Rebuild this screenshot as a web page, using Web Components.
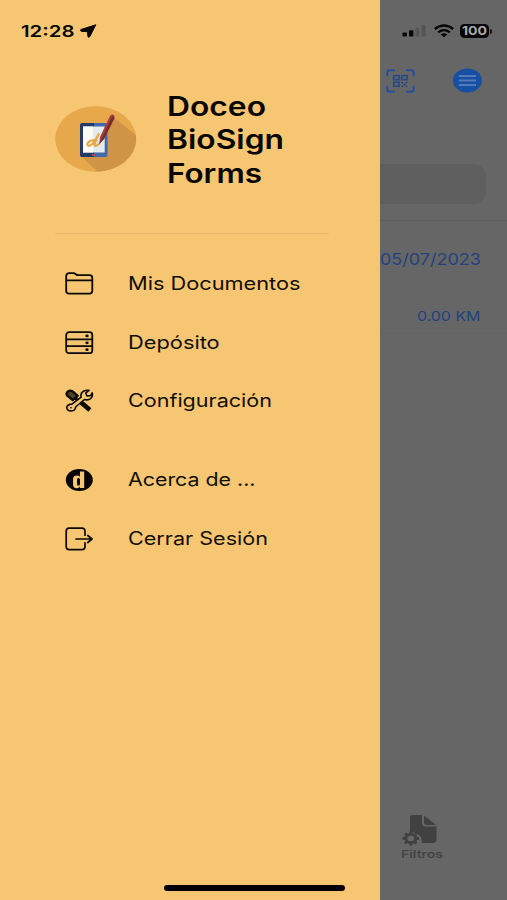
<!DOCTYPE html>
<html lang="es"><head><meta charset="utf-8"><title>Doceo BioSign Forms</title>
<style>html,body{margin:0;height:900px;overflow:hidden;background:#666}body{font-family:Inter,"Liberation Sans",sans-serif}</style></head>
<body><app-screen></app-screen>
<script>
const define=(name,html,ready)=>customElements.define(name,class extends HTMLElement{
  connectedCallback(){
    if(this.shadowRoot)return;
    this.attachShadow({mode:'open'}).innerHTML=html;
    if(ready)ready(this,this.shadowRoot);
  }
});

// A single line of text stretched horizontally to a given width.
define('wide-text',`<style>:host{display:block;white-space:nowrap;flex:none}span{display:inline-block;transform-origin:0 50%}</style><span><slot></slot></span>`,(el,root)=>{
  const s=root.querySelector('span'),w=+el.getAttribute('w');
  s.style.transform='scaleX('+w/s.getBoundingClientRect().width+')';
  el.style.width=w+'px';
});

const icons={
folder:`<g fill="none" stroke="#0b0903" stroke-width="1.8" stroke-linejoin="round"><path d="M1.2 20V4.2Q1.2 1.2 4.2 1.2H8.2Q9.5 1.2 10.8 2.2Q12 3.2 13.5 3.2H24.500Q27.300 3.200 27.300 6V18.800Q27.300 21.600 24.500 21.600H4Q1.200 21.600 1.200 18.800ZM1.200 8.300H27.300"/></g>`,
server:`<g fill="none" stroke="#0b0903" stroke-width="1.8"><rect x="1.2" y="1.2" width="26.1" height="21" rx="2.8"/><path d="M1.2 8.3H27.3M1.2 15.2H27.3"/></g><g fill="#0b0903"><ellipse cx="22" cy="4.9" rx="1.7" ry="1.4"/><ellipse cx="22" cy="11.8" rx="1.7" ry="1.4"/><ellipse cx="22" cy="18.7" rx="1.7" ry="1.4"/></g>`,
tools:`<g stroke="#0b0903" stroke-linejoin="round" stroke-linecap="round"><path d="M9 8L17 15.300" stroke-width="2.600"/><path d="M16.500 13.800L24.900 21" stroke-width="4.600" stroke-linecap="butt"/><path d="M2.200 3.300Q4 .9 7.300 2.200L12.700 6.800L7.700 11L2 6.300Q1.100 4.800 2.200 3.300Z" fill="#51441f" stroke-width="2.300"/><path d="M16.200 8.200Q15 4 18.400 2.200Q21 .9 24 1.400L20.700 4.200L22 7L25.500 6.600L27.200 3.900Q28.200 8.300 24.800 10.100Q22.200 11.400 19.400 10.500L10.600 18Q10.200 21.800 6.300 22Q2 22 1.800 18.800Q2 15.200 6.900 15.100Z" fill="#f7c672" stroke-width="1.600"/><ellipse cx="6" cy="18.700" rx=".9" ry=".8" fill="#0b0903" stroke="none"/></g>`,
about:`<ellipse cx="14.3" cy="12" rx="13.5" ry="11" fill="#050401"/><path fill="#f7c672" fill-rule="evenodd" d="M15 3.400H19.200V20H15V18.500Q13.800 20.400 11.600 20.200Q8 20.100 8 16.200V11.600Q8 7.700 11.600 7.600Q13.800 7.500 15 8.700ZM13.600 10Q12 10 12 12V15.800Q12 17.800 13.600 17.800Q15 17.700 15 15.800V12Q15 10.100 13.600 10Z"/>`,
logout:`<g fill="none" stroke="#0b0903" stroke-width="1.7" stroke-linecap="round" stroke-linejoin="round"><path d="M20 8.2V4Q20 1.2 17 1.2H4.2Q1.2 1.2 1.2 4V19.8Q1.2 22.6 4.2 22.6H17Q20 22.6 20 19.8V15.8M11 12H26.7M22.8 8.5L27 12L22.8 15.5"/></g>`,
};
define('menu-icon',`<style>:host{display:block;width:29px;height:24px;flex:none}svg{display:block}</style><svg width="29" height="24" viewBox="0 0 29 24"></svg>`,(el,root)=>{root.querySelector('svg').innerHTML=icons[el.getAttribute('name')]});

define('menu-item',`<style>:host{display:flex;align-items:center;height:58.6px;gap:34.5px;padding-left:64.5px;font-size:18.3px;line-height:24px;color:#110e05}slot:not([name])::slotted(*){padding-bottom:2px}</style><slot name="icon"></slot><slot></slot>`);

define('app-logo',`<style>:host{display:block;width:82px;height:66px;flex:none}svg{display:block}</style>
<svg width="82" height="66" viewBox="0 0 82 66"><defs><clipPath id="c"><ellipse cx="40.7" cy="33" rx="40.5" ry="32.8"/></clipPath></defs>
<ellipse cx="40.7" cy="33" rx="40.5" ry="32.8" fill="#e7a84b"/>
<path clip-path="url(#c)" d="M57 10L82 30V66H43L26 50L50 40Z" fill="#cf9446"/>
<rect x="25" y="17" width="27.5" height="34" rx="2.5" fill="#4169ad"/><path d="M27.5 17H39V51H27.5Q25 51 25 48.500V19.500Q25 17 27.500 17Z" fill="#233b68"/>
<rect x="28" y="20.500" width="21.700" height="26" fill="#e4ebef"/><path d="M28 20.500H38V46.500H28Z" fill="#fbfbf6"/><ellipse cx="38.600" cy="48.900" rx="1.800" ry="1.200" fill="#c34439"/>
<path d="M41.500 34.500Q36 33 33.200 36.500Q31 39.500 34 39.800Q38 39.500 44 27.500Q38 39 40 39.700Q42 40 44.500 37.500" fill="none" stroke="#e5ab48" stroke-width="2.300" stroke-linecap="round"/>
<path d="M55 10Q57 7.500 59.200 9.500Q60 11 59.300 13L49 33L44.200 38L45 31Z" fill="#a83b37"/><path d="M57.500 10L59.200 12L49 33L44.200 38Z" fill="#762c2e"/></svg>`);

define('side-drawer',`<style>
:host{display:flex;flex-direction:column;width:380px;height:900px;flex:none;background:#f7c672;color:#080601}
.status{display:flex;align-items:center;gap:5px;height:62px;padding-left:21px;font-size:16px;font-weight:600;line-height:20px}
.brand{display:flex;align-items:center;gap:30px;height:132px;padding:11px 0 28px 54.500px}
.title{display:flex;flex-direction:column;font-size:26.600px;font-weight:600;line-height:33.200px;padding-top:2px}
hr{width:274px;height:1px;border:0;margin:0 0 21px 54.500px;background:#e9ba6b;flex:none}
.second{margin-top:20px}
.home{width:181px;height:6px;border-radius:3px;background:#000;margin:auto 0 9px 163.500px}
</style>
<div class="status"><wide-text w="53.5">12:28</wide-text><svg width="17" height="14" viewBox="0 0 17 14"><path d="M15.800 .8L.8 5.600Q.2 7 1.100 7.300L7.500 7.700L8 12.900Q8.800 13.600 9.800 12.600Z" fill="#060501" stroke="#060501" stroke-width="1" stroke-linejoin="round"/></svg></div>
<div class="brand"><app-logo></app-logo><div class="title"><wide-text w="99">Doceo</wide-text><wide-text w="117">BioSign</wide-text><wide-text w="95">Forms</wide-text></div></div>
<hr>
<nav><menu-item><menu-icon slot="icon" name="folder"></menu-icon><wide-text w="172.5">Mis Documentos</wide-text></menu-item>
<menu-item><menu-icon slot="icon" name="server"></menu-icon><wide-text w="91.7">Depósito</wide-text></menu-item>
<menu-item><menu-icon slot="icon" name="tools"></menu-icon><wide-text w="144">Configuración</wide-text></menu-item></nav>
<nav class="second"><menu-item><menu-icon slot="icon" name="about"></menu-icon><wide-text w="127.5">Acerca de ...</wide-text></menu-item>
<menu-item><menu-icon slot="icon" name="logout"></menu-icon><wide-text w="140">Cerrar Sesión</wide-text></menu-item></nav>
<div class="home"></div>`);

define('dimmed-page',`<style>
:host{display:flex;flex-direction:column;width:127px;height:900px;background:#666;color:#22427f;overflow:hidden}
.status{display:flex;align-items:center;height:62px;padding-left:22px;gap:7.500px;box-sizing:border-box}
.battery{display:flex;align-items:center;gap:1px;margin-left:-1px}
.cell{background:#050505;border-radius:4.500px;width:29px;height:14px;display:flex;align-items:center;justify-content:center;color:#aaa;font-size:12px;font-weight:700;line-height:14px}
.nub{width:2px;height:5px;background:#111;border-radius:0 2px 2px 0}
.tools{display:flex;align-items:center;height:37px;padding-left:6px;gap:37px}
.search{width:105.500px;height:40px;border-radius:0 12px 12px 0;background:#5f5f5f;margin-top:65px}
.line{height:1px;background:#5e5e5e;margin-top:16px;flex:none}
.date{font-size:16.300px;line-height:22px;margin-top:27px}
.km{font-size:13.500px;line-height:20px;margin:36px 0 0 37px}
.faint{height:1px;background:#636363;margin-top:7px;flex:none}
.filter{margin:auto 0 38px 21px;width:44px;color:#444;font-size:11px;font-weight:600;line-height:15px}
.filter svg{display:block;margin:0 0 1px 1px}
</style>
<div class="status"><svg width="24" height="14" viewBox="0 0 24 14"><g fill="#080808"><rect x=".5" y="8.500" width="4.400" height="4.100" rx="1"/><rect x="7" y="6.300" width="4.400" height="6.300" rx="1"/></g><g fill="#545454"><rect x="13.300" y="3.800" width="4" height="8.800" rx="1"/><rect x="19.600" y="1" width="4" height="11.600" rx="1"/></g></svg>
<svg width="20" height="14" viewBox="0 0 20 14"><g fill="none" stroke="#060606" stroke-width="2.300"><path d="M.8 5Q10-2 19.200 5M4.200 8.300Q10 3.900 15.800 8.300"/></g><path d="M6.700 10.500Q10 8.100 13.300 10.500L10 13.300Z" fill="#060606"/></svg>
<div class="battery"><div class="cell"><wide-text w="25">100</wide-text></div><div class="nub"></div></div></div>
<div class="tools"><svg width="29" height="24" viewBox="0 0 29 24"><g fill="none" stroke="#24509a" stroke-width="2.100" stroke-linecap="round"><path d="M1.200 6.500V4Q1.200 1.200 4 1.200H8M21 1.200H25Q27.700 1.200 27.700 4V6.500M27.700 17.500V20Q27.700 22.800 25 22.800H21M8 22.800H4Q1.200 22.800 1.200 20V17.500"/></g><g fill="none" stroke="#294b85" stroke-width="1.700"><rect x="7.700" y="6.700" width="5.300" height="4"/><rect x="15.700" y="6.700" width="5.300" height="4"/><rect x="7.700" y="13.200" width="5.300" height="4"/><path d="M15.500 13.200L21.300 18M21.300 13.200L15.500 18" stroke-dasharray="1.900 .8"/></g></svg>
<svg width="30" height="25" viewBox="0 0 30 25"><ellipse cx="15.400" cy="12.500" rx="14.500" ry="12" fill="#174fa4"/><path d="M6.800 8H24M6.800 12.500H24M6.800 17H24" stroke="#547bb5" stroke-width="1.800"/></svg></div>
<div class="search"></div><div class="line"></div>
<wide-text class="date" w="101">05/07/2023</wide-text>
<wide-text class="km" w="63.5">0.00 KM</wide-text><div class="faint"></div>
<div class="filter"><svg width="36" height="32" viewBox="0 0 36 32"><path fill="#414141" d="M11 1H20V8Q20 12.500 24 12.500H34.500V25Q34.500 29 31 29H19.500Q20.500 24 17 21Q13 17.500 8 18.500V4Q8 1 11 1Z"/><path d="M22 1.600L34 11H25Q22 11 22 8.500Z" fill="#414141"/><ellipse cx="8.800" cy="24.500" rx="4.900" ry="4.200" fill="none" stroke="#414141" stroke-width="3"/><path d="M8.800 17.500V20M8.800 29V31.500M.6 24.500H3.500M14.200 24.500H17M3 19.600L5 21.300M12.600 27.700L14.600 29.400M3 29.400L5 27.700M12.600 21.300L14.600 19.600" stroke="#414141" stroke-width="2.900"/></svg><wide-text w="42">Filtros</wide-text></div>`);

define('app-screen',`<style>:host{display:flex;width:507px;height:900px}</style><side-drawer></side-drawer><dimmed-page></dimmed-page>`);
</script></body></html>
